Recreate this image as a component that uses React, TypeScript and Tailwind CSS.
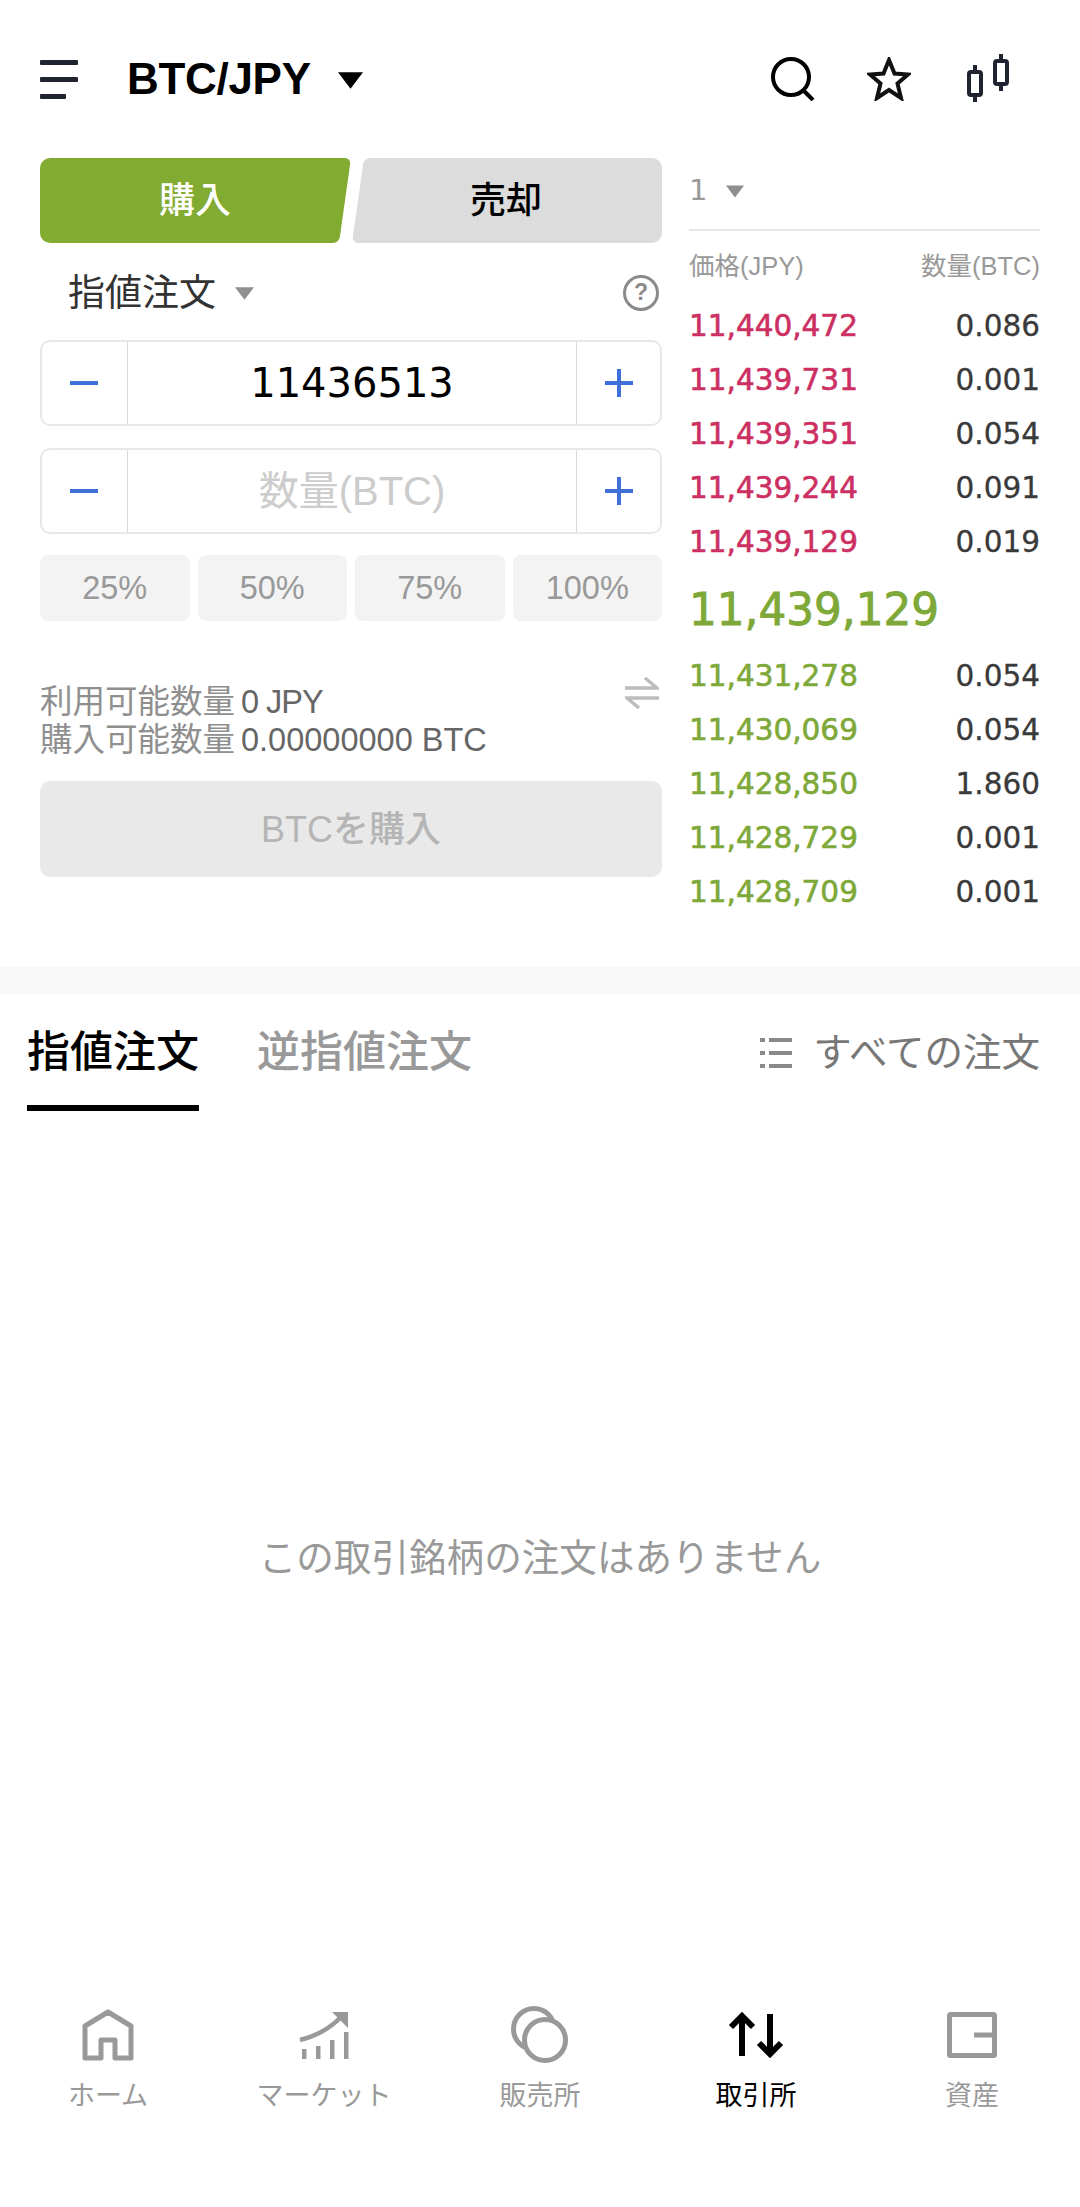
import React from "react";

const sans = "font-['Liberation_Sans','Noto_Sans_CJK_JP',sans-serif]";
const num = "font-['DejaVu_Sans',sans-serif]";

const asks = [
  ["11,440,472", "0.086"],
  ["11,439,731", "0.001"],
  ["11,439,351", "0.054"],
  ["11,439,244", "0.091"],
  ["11,439,129", "0.019"],
];

const bids = [
  ["11,431,278", "0.054"],
  ["11,430,069", "0.054"],
  ["11,428,850", "1.860"],
  ["11,428,729", "0.001"],
  ["11,428,709", "0.001"],
];

function Caret({ className }: { className: string }) {
  return (
    <svg viewBox="0 0 24 16" className={className} fill="currentColor">
      <path d="M0 0H24L12 16Z" />
    </svg>
  );
}

// order input with minus / plus on both ends
function Stepper({ children }: { children: React.ReactNode }) {
  return (
    <div className="flex h-[86px] rounded-[10px] border-2 border-[#e8e8e8] bg-white">
      <div className="flex w-[86px] shrink-0 items-center justify-center border-r border-[#d9d9d9] pr-[2px]">
        <svg viewBox="0 0 28 28" className="h-[28px] w-[28px]" stroke="#3f6fd8" strokeWidth="4">
          <path d="M0 14H28" />
        </svg>
      </div>
      <div className="flex flex-1 items-center justify-center">{children}</div>
      <div className="flex w-[84px] shrink-0 items-center justify-center border-l border-[#d9d9d9]">
        <svg viewBox="0 0 28 28" className="h-[28px] w-[28px]" stroke="#3f6fd8" strokeWidth="4">
          <path d="M0 14H28M14 0V28" />
        </svg>
      </div>
    </div>
  );
}

function BookRow({ price, qty, color }: { price: string; qty: string; color: string }) {
  return (
    <div className={`flex h-[54px] items-center justify-between pt-[5px] text-[29.5px] ${num}`}>
      <span className={`${color} [-webkit-text-stroke:0.6px]`}>{price}</span>
      <span className="text-[#3a3a3a] [-webkit-text-stroke:0.3px]">{qty}</span>
    </div>
  );
}

function NavItem({ label, active, children }: { label: string; active?: boolean; children: React.ReactNode }) {
  return (
    <div className="flex w-[216px] flex-col items-center">
      <div className="flex h-[60px] items-center justify-center">{children}</div>
      <div className={`mt-[13px] text-[27px] leading-[36px] ${active ? "text-black" : "text-[#999999]"}`}>{label}</div>
    </div>
  );
}

export default function App() {
  return (
    <div className={`flex h-[2207px] w-[1080px] flex-col overflow-hidden bg-white ${sans}`}>
      {/* header */}
      <div className="flex h-[158px] shrink-0 items-center px-[40px]">
        <svg viewBox="0 0 38 40" className="mt-[1px] h-[40px] w-[38px]" fill="#1f2430">
          <rect x="0" y="0" width="38" height="5" rx="1" />
          <rect x="0" y="17" width="38" height="5" rx="1" />
          <rect x="0" y="34" width="26" height="5" rx="1" />
        </svg>
        <div className="ml-[49px] text-[44px] font-bold tracking-[-0.3px] text-black">BTC/JPY</div>
        <Caret className="ml-[27px] mt-[2px] h-[17px] w-[25px] text-black" />
        <div className="ml-auto flex items-center">
          <svg viewBox="0 0 44 44" className="h-[44px] w-[44px]" fill="none" stroke="#000" strokeWidth="4">
            <circle cx="20" cy="20" r="18" />
            <path d="M32 33L42 43" />
          </svg>
          <svg viewBox="0 0 44 44" className="ml-[52px] h-[44px] w-[44px]" fill="none" stroke="#111" strokeWidth="4" strokeLinejoin="miter">
            <path d="M22 3L27.5 16.5L41 17.5L30.5 26.5L34 41L22 33L10 41L13.5 26.5L3 17.5L16.5 16.5Z" />
          </svg>
          <svg viewBox="0 0 50 50" className="ml-[53px] mr-[26px] h-[50px] w-[50px]" fill="none" stroke="#1f2430" strokeWidth="4">
            <rect x="5" y="18" width="12" height="23" rx="2" />
            <path d="M11 11V18M11 41V48" />
            <rect x="31" y="7" width="12" height="23" rx="2" />
            <path d="M37 0V7M37 30V37" />
          </svg>
        </div>
      </div>

      {/* order form + book */}
      <div className="flex shrink-0 gap-[27px] px-[40px]">
        <div className="w-[622px] shrink-0">
          <div className="flex h-[85px]">
            <div className="relative flex w-[310px] items-center justify-center">
              <div className="absolute inset-y-0 left-0 right-[20px] rounded-l-[10px] bg-[#82ab31]" />
              <div className="absolute inset-y-0 right-[5px] w-[50px] -skew-x-[8deg] rounded-r-[6px] bg-[#82ab31]" />
              <span className="relative text-[36px] font-medium text-white">購入</span>
            </div>
            <div className="relative flex w-[312px] items-center justify-center">
              <div className="absolute inset-y-0 left-[8px] w-[50px] -skew-x-[8deg] rounded-l-[6px] bg-[#dcdcdc]" />
              <div className="absolute inset-y-0 left-[20px] right-0 rounded-r-[10px] bg-[#dcdcdc]" />
              <span className="relative text-[36px] font-medium text-black">売却</span>
            </div>
          </div>

          <div className="flex h-[97px] items-center pl-[28px] pr-[3px] pt-[4px]">
            <span className="text-[37px] text-[#333333]">指値注文</span>
            <Caret className="ml-[19px] h-[13px] w-[19px] text-[#8f8f8f]" />
            <div className="ml-auto -mt-[2px] flex h-[36px] w-[36px] items-center justify-center rounded-full border-[3px] border-[#8a8a8a] text-[23px] font-bold text-[#8a8a8a]">?</div>
          </div>

          <Stepper>
            <span className={`text-[40px] text-black ${num}`}>11436513</span>
          </Stepper>
          <div className="mt-[22px]">
            <Stepper>
              <span className="text-[40px] text-[#cccccc]">数量(BTC)</span>
            </Stepper>
          </div>

          <div className="mt-[21px] grid grid-cols-4 gap-[8px]">
            {["25%", "50%", "75%", "100%"].map((p) => (
              <div key={p} className="flex h-[66px] items-center justify-center rounded-[8px] bg-[#f3f3f3] pt-[1px] text-[32.5px] text-[#999999]">{p}</div>
            ))}
          </div>

          <div className="mt-[62px] flex items-start justify-between">
            <div className="text-[32.5px] leading-[38px]">
              <div className="text-[#8f8f8f]">利用可能数量<span className="ml-[6px] tracking-[-1px] text-[#666666]">0 JPY</span></div>
              <div className="text-[#8f8f8f]">購入可能数量<span className="ml-[6px] text-[#666666]">0.00000000 BTC</span></div>
            </div>
            <svg viewBox="0 0 34 32" className="-mt-[6px] mr-[3px] h-[32px] w-[34px]" fill="none" stroke="#bdbdbd" strokeWidth="3.5">
              <path d="M0 11H32L20 1" />
              <path d="M34 21H2L14 31" />
            </svg>
          </div>

          <div className="mt-[22px] flex h-[96px] items-center justify-center rounded-[10px] bg-[#e9e9e9] pt-[1px] text-[36px] font-medium text-[#b5b5b5]">BTCを購入</div>
        </div>

        <div className="w-[351px] shrink-0">
          <div className="flex h-[73px] items-center border-b-2 border-[#e6e6e6] pb-[5px]">
            <span className={`text-[29px] text-[#999999] ${num}`}>1</span>
            <Caret className="ml-[19px] h-[13px] w-[18px] text-[#8f8f8f]" />
          </div>
          <div className="flex h-[66px] items-center justify-between pt-[5px] text-[25.5px] text-[#999999]">
            <span>価格(JPY)</span>
            <span>数量(BTC)</span>
          </div>
          {asks.map(([p, q]) => (
            <BookRow key={p} price={p} qty={q} color="text-[#cc2f61]" />
          ))}
          <div className={`flex h-[80px] items-center pt-[5px] text-[43.7px] text-[#7ea838] [-webkit-text-stroke:0.9px] ${num}`}>11,439,129</div>
          {bids.map(([p, q]) => (
            <BookRow key={p} price={p} qty={q} color="text-[#7ea838]" />
          ))}
        </div>
      </div>

      <div className="mt-[50px] h-[27px] shrink-0 bg-[#f8f8f8]" />

      {/* order tabs */}
      <div className="flex h-[117px] shrink-0 items-start pl-[27px] pr-[40px]">
        <div className="flex h-[117px] items-center border-b-[6px] border-black pt-[6px] text-[43px] font-medium text-black">指値注文</div>
        <div className="ml-[58px] flex h-[117px] items-center border-b-[6px] border-transparent pt-[6px] text-[43px] font-medium text-[#999999]">逆指値注文</div>
        <div className="ml-auto flex h-[117px] items-center text-[38.5px] text-[#777777]">
          <svg viewBox="0 0 32 30" className="mr-[21px] h-[30px] w-[32px]" fill="#8a8a8a">
            <rect x="0" y="0" width="5" height="4" />
            <rect x="9" y="0" width="23" height="4" />
            <rect x="0" y="13" width="5" height="4" />
            <rect x="9" y="13" width="23" height="4" />
            <rect x="0" y="26" width="5" height="4" />
            <rect x="9" y="26" width="23" height="4" />
          </svg>
          すべての注文
        </div>
      </div>

      <div className="flex flex-1 items-center justify-center text-[37.6px] text-[#999999]">この取引銘柄の注文はありません</div>

      {/* bottom nav */}
      <div className="flex h-[202px] shrink-0">
        <NavItem label="ホーム">
          <svg viewBox="0 0 52 52" className="h-[52px] w-[52px]" fill="none" stroke="#999" strokeWidth="5" strokeLinejoin="round">
            <path d="M3 17L26 3L49 17V49H33V31H19V49H3Z" />
          </svg>
        </NavItem>
        <NavItem label="マーケット">
          <svg viewBox="0 0 50 50" className="h-[50px] w-[50px]" fill="#999">
            <rect x="3" y="39" width="4.5" height="10" />
            <rect x="17" y="36" width="4.5" height="13" />
            <rect x="31" y="30" width="4.5" height="19" />
            <rect x="45" y="22" width="4.5" height="27" />
            <path d="M1 30Q26 24 43 6" fill="none" stroke="#999" strokeWidth="4.5" />
            <path d="M33 2H49V18Z" />
          </svg>
        </NavItem>
        <NavItem label="販売所">
          <svg viewBox="0 0 60 60" className="h-[60px] w-[60px]" fill="#fff" stroke="#999" strokeWidth="5">
            <circle cx="24" cy="24" r="20.5" />
            <circle cx="35" cy="35" r="20.5" />
          </svg>
        </NavItem>
        <NavItem label="取引所" active>
          <svg viewBox="0 0 60 50" className="h-[50px] w-[60px]" fill="none" stroke="#000" strokeWidth="6">
            <path d="M16 46V6M5 17L16 6L27 17" />
            <path d="M44 4V44M33 33L44 44L55 33" />
          </svg>
        </NavItem>
        <NavItem label="資産">
          <svg viewBox="0 0 50 46" className="h-[46px] w-[50px]" fill="none" stroke="#999" strokeWidth="5">
            <rect x="2.5" y="2.5" width="45" height="41" rx="1" />
            <path d="M27 23H47" />
          </svg>
        </NavItem>
      </div>
    </div>
  );
}
